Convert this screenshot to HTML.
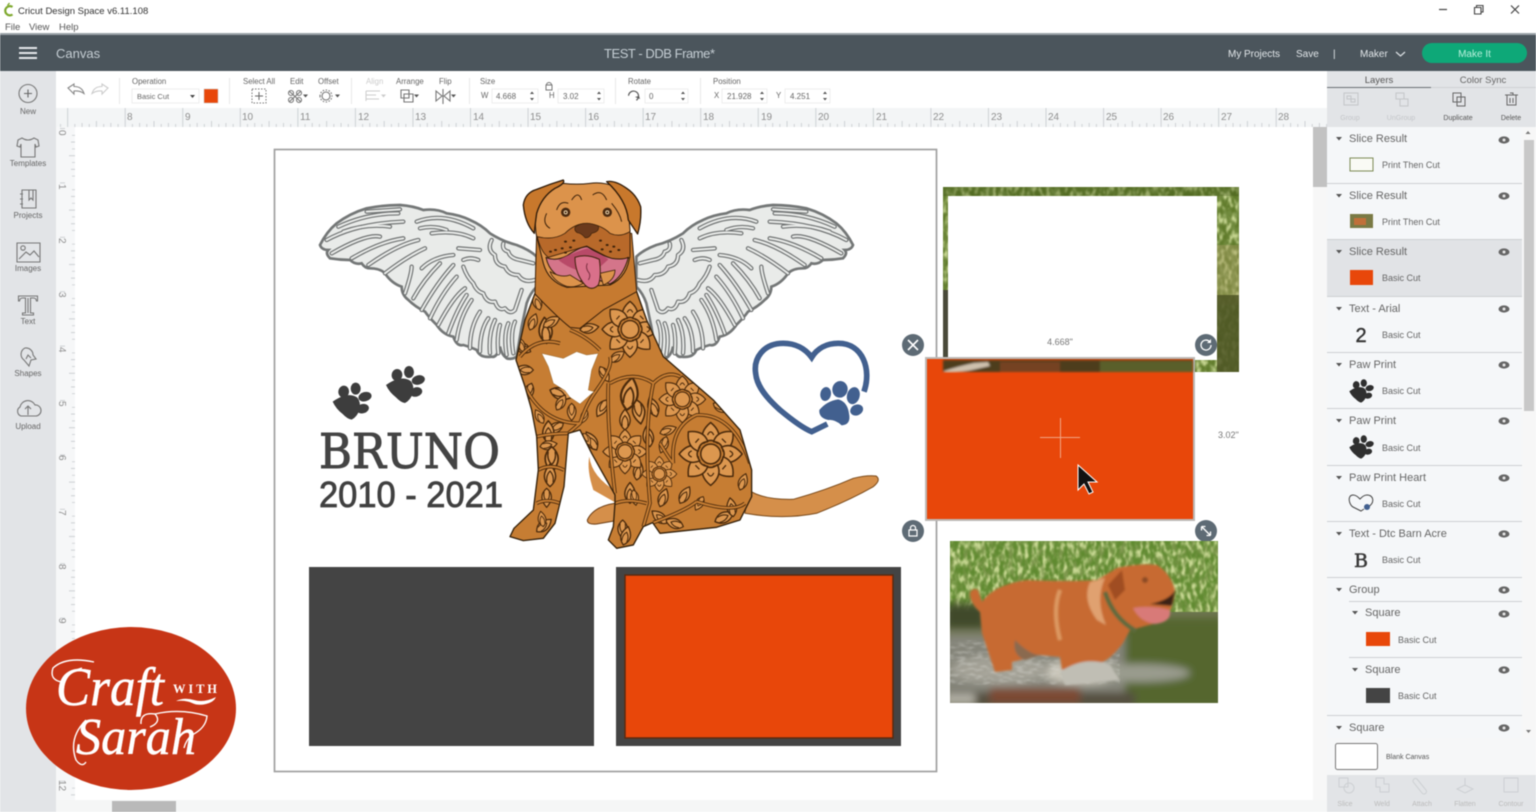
<!DOCTYPE html>
<html><head><meta charset="utf-8"><title>Cricut Design Space</title>
<style>
html,body{margin:0;padding:0;width:1536px;height:812px;overflow:hidden;background:#fff}
svg{display:block;position:absolute;left:0;top:0;filter:blur(.4px)}
text{font-family:"Liberation Sans",sans-serif}
.t{font-size:7.8px;fill:#666}
.l{font-size:8px;fill:#666;text-anchor:middle}
.v{font-size:8px;fill:#666}
.r{font-size:10px;fill:#8e8e8e}
.h{font-size:11px;fill:#666}
.c{font-size:9px;fill:#666}
.a{font-size:7px;fill:#555;text-anchor:middle}
.d{font-size:7px;fill:#bbb;text-anchor:middle}
.ic{fill:none;stroke:#777;stroke-width:1.1}
.ln{fill:none;stroke:#4a2a0c;stroke-width:2.8}
.pt{fill:#dc974f;stroke:#4a2a0c;stroke-width:3.4}
</style></head><body>
<svg width="1536" height="812" viewBox="0 0 1536 812" xmlns="http://www.w3.org/2000/svg">
<defs>
<pattern id="rt" patternUnits="userSpaceOnUse" x="124.7" y="108" width="57.55" height="19">
<path d="M.5 0V19M7.7 16V19M14.9 15V19M22.1 16V19M29.3 13V19M36.5 16V19M43.7 15V19M50.9 16V19" stroke="#bfc3c7" stroke-width=".7" fill="none"/></pattern>
<pattern id="rl" patternUnits="userSpaceOnUse" x="56" y="128" width="19" height="54.4">
<path d="M4 .5H9M16 7.3H19M15 14.1H19M16 20.9H19M13 27.7H19M16 34.5H19M15 41.3H19M16 48.1H19" stroke="#bfc3c7" stroke-width=".7" fill="none"/></pattern>
<g id="eye"><ellipse cx="0" cy="0" rx="5.5" ry="3.6" fill="#666"/><circle cx="0" cy="0" r="1.5" fill="#e8e8e8"/></g>
<path id="tri" d="M-3-2H3L0 1.5Z" fill="#555"/>
<g id="paw"><path d="M68,125 Q85,113 100,108 Q125,101 142,113 Q154,127 148,150 Q142,170 125,179 Q112,177 98,162 Q78,147 68,125Z"/><ellipse cx="101" cy="95" rx="16" ry="18" transform="rotate(10 101 95)"/><ellipse cx="137" cy="86" rx="15" ry="18"/><ellipse cx="165" cy="110" rx="20" ry="14" transform="rotate(-15 165 110)"/><ellipse cx="158" cy="146" rx="19" ry="14" transform="rotate(-15 158 146)"/></g>
<g id="fe" fill="none" stroke-linecap="round" stroke-linejoin="round">
<path d="M115,170 Q200,130 295,130M80,210 Q170,160 310,155M95,250 Q200,190 240,200M155,265 Q240,215 310,205M205,285 Q290,225 355,210M255,310 Q320,260 375,235M315,370 Q335,310 335,290M365,295 Q400,260 460,255M365,420 Q410,340 460,285M415,465 Q460,380 495,355M470,510 Q480,440 515,390M540,545 Q540,480 565,445M595,550 Q590,500 600,465M640,550 Q630,490 645,455M340,385 Q370,330 420,280M390,445 Q425,370 470,320M445,490 Q470,420 500,375M510,535 Q510,470 540,425M570,550 Q565,490 585,450M620,555 Q610,495 625,460"/>
<path d="M350,155 Q430,125 520,175M395,190 Q470,180 520,205M475,235 L540,240M490,270 Q510,260 535,270M360,175 Q400,165 440,180M200,125 L300,118M130,185 Q200,160 270,170"/>
<path d="M490,290 q10,30 30,50 q10,25 30,30 q10,30 35,25 q10,30 30,20 q15,20 30,5 l20,-60"/>
<path d="M575,210 q-15,30 10,45 q0,30 30,35 q10,25 40,25 q15,25 50,15M610,220 q-5,20 15,25 q5,20 35,25 l40,10"/>
</g>
<path id="wo" d="M60,225 Q80,185 110,160 Q150,130 200,115 Q250,105 300,105 Q340,108 370,120 Q410,115 440,130 Q480,135 510,150 Q545,165 570,190 Q610,215 650,225 Q690,240 710,260 L710,350 Q690,370 680,400 L665,470 L650,560 Q635,570 620,565 Q605,555 600,530 Q590,565 575,560 Q540,565 530,540 Q510,530 490,525 Q470,530 460,500 Q430,495 410,465 Q385,440 375,425 Q345,410 325,390 Q305,375 305,350 Q275,340 255,310 Q240,295 210,295 Q195,295 185,280 Q165,285 150,270 Q120,270 90,265 Q75,250 85,240 Q65,240 60,225Z"/>
<g id="wing"><use href="#wo" fill="#e9ebe9" stroke="#747777" stroke-width="8"/><use href="#fe" stroke="#6f7272" stroke-width="13"/><use href="#fe" stroke="#e9ebe9" stroke-width="6"/></g>
<path id="pet" d="M-15,-24 Q-27,-48 0,-70 Q27,-48 15,-24 Q0,-36 -15,-24Z"/>
<g id="fl"><g class="pt">
<use href="#pet"/><use href="#pet" transform="rotate(45)"/><use href="#pet" transform="rotate(90)"/><use href="#pet" transform="rotate(135)"/><use href="#pet" transform="rotate(180)"/><use href="#pet" transform="rotate(225)"/><use href="#pet" transform="rotate(270)"/><use href="#pet" transform="rotate(315)"/>
<circle r="22"/></g>
<path class="ln" d="M-7,-42 Q0,-56 7,-42M-7,42 Q0,56 7,42M-42,-7 Q-56,0 -42,7M42,-7 Q56,0 42,7M-34,-25 L-26,-34M34,25 L26,34M25,-34 L34,-25M-25,34 L-34,25"/></g>
<g id="lf"><path class="pt" d="M0,0 Q-26,-22 0,-52 Q26,-22 0,0Z"/><path class="ln" d="M-7,-10 Q-10,-26 0,-36 Q10,-26 7,-10"/></g>
<path id="bdy" d="M105,370 L75,450 L48,570 L75,650 L95,720 L110,800 L115,900 L100,1020 L42,1075 L30,1100 L70,1112 L130,1105 L165,1060 L192,950 L205,790 L240,780 L275,850 L345,975 L345,1000 L340,1070 L325,1110 L350,1135 L400,1125 L430,1070 L458,1058 L480,1090 L650,1072 L720,1050 L755,980 L755,900 L720,780 L640,690 L490,560 L440,450 L410,365Z"/>
<clipPath id="bc"><use href="#bdy"/></clipPath>
<path id="band" d="M75,650 Q130,760 240,760 Q260,700 290,660M325,640 Q320,760 345,970M460,640 Q430,780 450,1000L430,1070M460,1058 Q560,1020 590,995M520,880 Q510,770 590,735 Q700,730 750,880M590,995 Q700,1030 735,1000M205,790 L240,760M110,800 Q155,790 205,790M290,660 Q340,590 330,560M330,640 Q400,600 460,640M60,560 Q110,500 180,520M115,900 Q150,880 192,900M110,1000 Q140,985 180,1000M345,1000 Q385,985 440,1000M460,640 Q500,600 540,620M480,820 Q510,870 520,880M210,480 Q260,500 300,540" fill="none" stroke-linejoin="round"/>
<filter id="b1" x="-5%" y="-5%" width="110%" height="110%"><feGaussianBlur stdDeviation="1.1"/></filter>
<filter id="b2" x="-10%" y="-10%" width="120%" height="120%"><feGaussianBlur stdDeviation="4"/></filter>
<filter id="dk" x="0" y="0" width="100%" height="100%"><feTurbulence type="fractalNoise" baseFrequency=".22 .09" numOctaves="3" seed="4"/><feColorMatrix values="0 0 0 0 .2  0 0 0 0 .3  0 0 0 0 .07  3.5 0 0 0 -1.5"/><feGaussianBlur stdDeviation=".7"/><feComposite in2="SourceAlpha" operator="in"/></filter>
<filter id="lt" x="0" y="0" width="100%" height="100%"><feTurbulence type="fractalNoise" baseFrequency=".28 .12" numOctaves="3" seed="11"/><feColorMatrix values="0 0 0 0 .62  0 0 0 0 .72  0 0 0 0 .32  3.5 0 0 0 -1.6"/><feGaussianBlur stdDeviation=".7"/><feComposite in2="SourceAlpha" operator="in"/></filter>
<filter id="wn" x="0" y="0" width="100%" height="100%"><feTurbulence type="fractalNoise" baseFrequency=".12 .35" numOctaves="2" seed="7"/><feColorMatrix values="0 0 0 0 .8  0 0 0 0 .8  0 0 0 0 .76  3.5 0 0 0 -1.6"/><feGaussianBlur stdDeviation=".8"/><feComposite in2="SourceAlpha" operator="in"/></filter>
<clipPath id="pc"><rect x="950" y="541" width="268" height="162"/></clipPath>
</defs>

<!-- app chrome -->
<rect width="1536" height="33" fill="#fff"/>
<rect y="33" width="1536" height="2" fill="#9aa2a8"/>
<rect y="35" width="1536" height="36" fill="#4b555c"/>
<rect y="71" width="56" height="741" fill="#e2e4e7"/>
<rect x="56" y="71" width="1271" height="37" fill="#fff"/>
<rect x="56" y="108" width="1271" height="19" fill="#f3f5f6"/>
<rect x="56" y="108" width="1271" height="19" fill="url(#rt)"/>
<rect x="56" y="127" width="19" height="673" fill="#f6f7f8"/>
<rect x="56" y="127" width="19" height="673" fill="url(#rl)"/>
<rect x="75" y="127" width="1238" height="673" fill="#fff"/>
<rect x="56" y="800" width="1271" height="12" fill="#f5f6f6"/>
<rect x="112" y="801" width="64" height="11" fill="#b9b9b9"/>
<rect x="1313" y="127" width="14" height="673" fill="#f7f7f7"/>
<rect x="1313" y="127" width="14" height="60" fill="#c2c2c2"/>

<!-- title bar -->
<path d="M12.500 7A4.600 4.600 0 1 0 12.500 14.500" fill="none" stroke="#7da82c" stroke-width="2.200"/>
<path d="M7.500 5.500L9.500 3" stroke="#7da82c" stroke-width="1.400"/>
<text x="18" y="14" font-size="9.500" fill="#333">Cricut Design Space  v6.11.108</text>
<text x="5" y="30" font-size="9.500" fill="#555">File</text>
<text x="29" y="30" font-size="9.500" fill="#555">View</text>
<text x="59" y="30" font-size="9.500" fill="#555">Help</text>
<path d="M1439 9.500H1447" stroke="#444" stroke-width="1.200"/>
<path d="M1474.500 7.500h6.500v6.500h-6.500zM1476.500 7.500v-2h6.500v6.500h-2" fill="none" stroke="#444" stroke-width="1.100"/>
<path d="M1511 5.500l8 8M1519 5.500l-8 8" stroke="#444" stroke-width="1.200"/>

<!-- header -->
<path d="M19 48H37M19 53H37M19 58H37" stroke="#e4e7ea" stroke-width="2"/>
<text x="56" y="58" font-size="13" fill="#c5ced4">Canvas</text>
<text x="604" y="58" font-size="13" fill="#c5ced4" textLength="111">TEST - DDB Frame*</text>
<text x="1228" y="57" font-size="10" fill="#e2e7ea" textLength="52">My Projects</text>
<text x="1296" y="57" font-size="10" fill="#e2e7ea">Save</text>
<text x="1333" y="57" font-size="10" fill="#e2e7ea">|</text>
<text x="1360" y="57" font-size="10" fill="#e2e7ea">Maker</text>
<path d="M1396 52l4.500 4 4.500-4" fill="none" stroke="#dde2e5" stroke-width="1.200"/>
<rect x="1422" y="43" width="105" height="20" rx="10" fill="#0ea878"/>
<text x="1474.500" y="57" font-size="10" fill="#b8f0dc" text-anchor="middle">Make It</text>

<!-- sidebar -->
<circle cx="28" cy="93.500" r="9" fill="none" stroke="#777" stroke-width="1.100"/><path d="M24 93.500h8M28 89.500v8" stroke="#666" stroke-width="1.100"/>
<text class="l" x="28" y="114">New</text>
<path class="ic" d="M22 138l-4 2-1 6 3 1 1-3v13h14v-13l1 3 3-1-1-6-4-2q-6 4-12 0Z"/>
<text class="l" x="28" y="166">Templates</text>
<path class="ic" d="M22 190h14v18H22zM29 190v10l2-2 2 2v-10M20 194h3M20 199h3M20 204h3"/>
<text class="l" x="28" y="218">Projects</text>
<path class="ic" d="M17 243h23v19H17zM19 259l7-7 4 3 4-4 5 6"/><circle class="ic" cx="23" cy="248" r="2.200"/>
<text class="l" x="28" y="271">Images</text>
<path class="ic" d="M18.500 296h19v5h-1q-.5-3-3-3h-3v15h3v2h-11v-2h3V298h-3q-2.500 0-3 3h-1ZM28 298v15"/>
<text class="l" x="28" y="324">Text</text>
<path class="ic" d="M25 348a7 7 0 0 1 8 7l3 4-5 1-2 6-5-6a7 7 0 0 1 1-12ZM26 359l2-4 3 3"/>
<text class="l" x="28" y="376">Shapes</text>
<path class="ic" d="M21 416a5 5 0 0 1-1-9 8 8 0 0 1 15-2 5.500 5.500 0 0 1 1 11ZM28 415v-8M25 409l3-3 3 3"/>
<text class="l" x="28" y="429">Upload</text>

<!-- toolbar -->
<path d="M68 88l6-4v2.500q8 0 10 7-4-3-10-2.500V94Z" fill="none" stroke="#888" stroke-width="1.100"/>
<path d="M108 88l-6-4v2.500q-8 0-10 7 4-3 10-2.500V94Z" fill="none" stroke="#ccc" stroke-width="1.100"/>
<path d="M119.500 78V104M229.500 78V104M351.500 78V104M469.500 78V104M615.500 78V104M700.500 78V104" stroke="#e8e8e8"/>
<text class="t" x="132" y="84">Operation</text>
<rect x="132" y="89" width="67" height="14" fill="#fff" stroke="#eee"/>
<text class="v" x="137" y="99" style="font-size:7.500px">Basic Cut</text><path d="M190 95h5l-2.500 3Z" fill="#444"/>
<rect x="204" y="89" width="14" height="14" fill="#e8470a" stroke="#ccc" stroke-width=".5"/>
<text class="t" x="243" y="84">Select All</text>
<rect x="252" y="89" width="14" height="14" fill="none" stroke="#777" stroke-dasharray="1.500 1.500"/><path d="M259 92v8M255 96h8" stroke="#666"/>
<text class="t" x="290" y="84">Edit</text>
<path class="ic" d="M289 91l12 11M301 91l-12 11"/><circle class="ic" cx="291" cy="93" r="2.500"/><circle class="ic" cx="299" cy="93" r="2.500"/><circle class="ic" cx="291" cy="100" r="2.500"/><circle class="ic" cx="299" cy="100" r="2.500"/><path d="M303 94.500h5l-2.500 3Z" fill="#555"/>
<text class="t" x="318" y="84">Offset</text>
<circle class="ic" cx="326" cy="96" r="4"/><path class="ic" stroke-dasharray="1.500 1.500" d="M320 96a6 6 0 1 0 12 0a6 6 0 1 0-12 0"/><path d="M335 94.500h5l-2.500 3Z" fill="#555"/>
<text class="t" x="366" y="84" style="fill:#ccc">Align</text>
<path d="M366 91h14M366 95h10M366 99h13M366 91v10" stroke="#ccc" fill="none"/><path d="M381 94.500h5l-2.500 3Z" fill="#ccc"/>
<text class="t" x="396" y="84">Arrange</text>
<path class="ic" d="M401 90h8v8h-8zM404 94h9v8h-9z"/><path d="M414 94.500h5l-2.500 3Z" fill="#555"/>
<text class="t" x="439" y="84">Flip</text>
<path class="ic" d="M436 91l6 5-6 5zM450 91l-6 5 6 5zM443 89v15"/><path d="M451 94.500h5l-2.500 3Z" fill="#555"/>
<text class="t" x="480" y="84">Size</text>
<text class="t" x="481" y="98">W</text>
<rect x="492" y="89" width="46" height="14" fill="#fff" stroke="#eee"/><text class="v" x="496" y="99">4.668</text>
<path d="M530 94l2-2.500 2 2.500ZM530 98l2 2.500 2-2.500Z" fill="#555"/>
<circle class="ic" cx="549" cy="85" r="2.500"/><path d="M546 85h6v5h-6z" fill="#fff" stroke="#777"/>
<text class="t" x="549" y="98">H</text>
<rect x="558" y="89" width="46" height="14" fill="#fff" stroke="#eee"/><text class="v" x="563" y="99">3.02</text>
<path d="M597 94l2-2.500 2 2.500ZM597 98l2 2.500 2-2.500Z" fill="#555"/>
<text class="t" x="628" y="84">Rotate</text>
<path d="M638 98a5 5 0 1 0-9 0" fill="none" stroke="#555" stroke-width="1.200" transform="rotate(30 633 96)"/><path d="M635 97l4-1 1 3Z" fill="#555"/>
<rect x="645" y="89" width="43" height="14" fill="#fff" stroke="#eee"/><text class="v" x="649" y="99">0</text>
<path d="M681 94l2-2.500 2 2.500ZM681 98l2 2.500 2-2.500Z" fill="#555"/>
<text class="t" x="713" y="84">Position</text>
<text class="t" x="714" y="98">X</text>
<rect x="722" y="89" width="45" height="14" fill="#fff" stroke="#eee"/><text class="v" x="727" y="99">21.928</text>
<path d="M760 94l2-2.500 2 2.500ZM760 98l2 2.500 2-2.500Z" fill="#555"/>
<text class="t" x="776" y="98">Y</text>
<rect x="785" y="89" width="45" height="14" fill="#fff" stroke="#eee"/><text class="v" x="790" y="99">4.251</text>
<path d="M823 94l2-2.500 2 2.500ZM823 98l2 2.500 2-2.500Z" fill="#555"/>

<!-- rulers text -->
<text class="r" x="127" y="120">8</text><text class="r" x="185" y="120">9</text><text class="r" x="242" y="120">10</text><text class="r" x="300" y="120">11</text><text class="r" x="358" y="120">12</text><text class="r" x="415" y="120">13</text><text class="r" x="473" y="120">14</text><text class="r" x="530" y="120">15</text><text class="r" x="588" y="120">16</text><text class="r" x="645" y="120">17</text><text class="r" x="703" y="120">18</text><text class="r" x="761" y="120">19</text><text class="r" x="818" y="120">20</text><text class="r" x="876" y="120">21</text><text class="r" x="933" y="120">22</text><text class="r" x="991" y="120">23</text><text class="r" x="1048" y="120">24</text><text class="r" x="1106" y="120">25</text><text class="r" x="1163" y="120">26</text><text class="r" x="1221" y="120">27</text><text class="r" x="1278" y="120">28</text>
<text class="r" transform="translate(59,130) rotate(90)">0</text><text class="r" transform="translate(59,184) rotate(90)">1</text><text class="r" transform="translate(59,238) rotate(90)">2</text><text class="r" transform="translate(59,292) rotate(90)">3</text><text class="r" transform="translate(59,347) rotate(90)">4</text><text class="r" transform="translate(59,401) rotate(90)">5</text><text class="r" transform="translate(59,455) rotate(90)">6</text><text class="r" transform="translate(59,510) rotate(90)">7</text><text class="r" transform="translate(59,564) rotate(90)">8</text><text class="r" transform="translate(59,618) rotate(90)">9</text><text class="r" transform="translate(59,780) rotate(90)">12</text>

<!-- mat -->
<rect x="274.500" y="149.500" width="662" height="622" fill="#fff" stroke="#a0a0a0" stroke-width="1.700"/>

<!-- wings -->
<g transform="translate(300,170) scale(.3333)"><use href="#wing"/></g>
<g transform="translate(873,170) scale(-.3333,.3333)"><use href="#wing"/></g>

<!-- dog -->
<g transform="translate(500,170) scale(.3333)" stroke-linejoin="round">
<path d="M745,960 Q790,990 880,988 Q980,960 1060,925 Q1100,915 1128,918 Q1145,930 1120,950 Q1050,990 950,1030 Q850,1050 735,1030Z" fill="#d58f4a" stroke="#7a4a1a" stroke-width="3"/>
<path d="M262,1050 Q280,1010 345,1000 L360,1050 L290,1062 Q262,1065 262,1050Z" fill="#d58f4a" stroke="#6a3c14" stroke-width="3"/>
<path d="M268,860 Q275,920 350,965 L350,1000 L280,960 Q260,900 268,860Z" fill="#d58f4a"/>
<use href="#bdy" fill="#c67d33"/>
<g clip-path="url(#bc)">
<use href="#lf" transform="translate(140,520) rotate(-5) scale(1.500)"/>
<use href="#lf" transform="translate(92,545) rotate(-65) scale(1.100)"/>
<use href="#lf" transform="translate(100,600) rotate(-90) scale(1.100)"/>
<use href="#lf" transform="translate(95,640) rotate(200) scale(1.100)"/>
<use href="#lf" transform="translate(150,660) rotate(110) scale(1.300)"/>
<use href="#lf" transform="translate(215,700) rotate(180) scale(1)"/>
<use href="#lf" transform="translate(190,760) rotate(-120) scale(1.100)"/>
<use href="#lf" transform="translate(145,820) rotate(0) scale(1.300)"/>
<use href="#lf" transform="translate(120,830) rotate(80) scale(1)"/>
<use href="#lf" transform="translate(155,830) rotate(180) scale(1.500)"/>
<use href="#lf" transform="translate(150,950) rotate(0) scale(1.300)"/>
<use href="#lf" transform="translate(140,955) rotate(180) scale(1.100)"/>
<use href="#lf" transform="translate(110,1085) rotate(50) scale(1.100)"/>
<use href="#lf" transform="translate(130,1070) rotate(-10) scale(.9)"/>
<use href="#lf" transform="translate(290,840) rotate(-30) scale(1.200)"/>
<use href="#lf" transform="translate(250,790) rotate(150) scale(.8)"/>
<use href="#lf" transform="translate(380,720) rotate(10) scale(1.900)"/>
<use href="#lf" transform="translate(410,690) rotate(170) scale(1.400)"/>
<use href="#lf" transform="translate(375,780) rotate(0) scale(1.200)"/>
<use href="#lf" transform="translate(368,1050) rotate(180) scale(1.100)"/>
<use href="#lf" transform="translate(390,1000) rotate(0) scale(1.200)"/>
<use href="#lf" transform="translate(370,1125) rotate(15) scale(1.100)"/>
<use href="#lf" transform="translate(645,1055) rotate(65) scale(1.200)"/>
<use href="#lf" transform="translate(550,1070) rotate(-70) scale(1.100)"/>
<use href="#lf" transform="translate(700,1040) rotate(-10) scale(1.100)"/>
<use href="#lf" transform="translate(500,1060) rotate(-50) scale(1.100)"/>
<use href="#lf" transform="translate(330,575) rotate(55) scale(1)"/>
<use href="#lf" transform="translate(450,830) rotate(-10) scale(1.200)"/>
<use href="#lf" transform="translate(480,790) rotate(70) scale(1)"/>
<use href="#lf" transform="translate(480,1010) rotate(20) scale(1.100)"/>
<use href="#lf" transform="translate(640,700) rotate(120) scale(1)"/>
<use href="#lf" transform="translate(120,420) rotate(-20) scale(1)"/>
<use href="#lf" transform="translate(130,470) rotate(60) scale(1.100)"/>
<use href="#lf" transform="translate(90,480) rotate(20) scale(1)"/>
<use href="#lf" transform="translate(70,545) rotate(-20) scale(.9)"/>
<use href="#lf" transform="translate(240,480) rotate(80) scale(1.100)"/>
<use href="#lf" transform="translate(300,590) rotate(150) scale(1)"/>
<use href="#lf" transform="translate(320,690) rotate(-150) scale(1.100)"/>
<use href="#lf" transform="translate(170,720) rotate(30) scale(1)"/>
<use href="#lf" transform="translate(260,720) rotate(200) scale(.8)"/>
<use href="#lf" transform="translate(130,760) rotate(-30) scale(.9)"/>
<use href="#lf" transform="translate(410,930) rotate(10) scale(1.100)"/>
<use href="#lf" transform="translate(400,960) rotate(170) scale(.9)"/>
<use href="#lf" transform="translate(540,1000) rotate(30) scale(1.100)"/>
<use href="#lf" transform="translate(610,980) rotate(-150) scale(.9)"/>
<use href="#lf" transform="translate(470,740) rotate(-20) scale(1.200)"/>
<use href="#lf" transform="translate(500,800) rotate(200) scale(1)"/>
<use href="#lf" transform="translate(720,960) rotate(20) scale(1)"/>
<use href="#fl" transform="translate(390,478) scale(1.200)"/>
<use href="#fl" transform="translate(547,688) scale(1)"/>
<use href="#fl" transform="translate(632,852) scale(1.350)"/>
<use href="#fl" transform="translate(375,845) scale(.95)"/>
<use href="#fl" transform="translate(478,912) scale(.75)"/>
<use href="#band" stroke="#4a2a0c" stroke-width="11"/>
<use href="#band" stroke="#c67d33" stroke-width="6"/>
</g>
<use href="#bdy" fill="none" stroke="#33200a" stroke-width="4"/>
<path d="M125,550 L190,565 L230,545 L260,555 L295,550 L275,600 L265,660 L282,665 L240,702 L210,682 L195,662 L160,640 L145,590Z" fill="#fff" stroke="#9a6a30" stroke-width="1.500"/>
<path d="M110,190 L105,372 Q170,440 210,472 L240,475 L310,420 L410,365 L395,190Z" fill="#c67a30" stroke="#3d220a" stroke-width="3"/>
<path d="M110,72 Q150,42 190,40 Q230,45 270,40 Q310,35 345,50 Q385,85 390,180 L390,250 Q385,320 330,345 L200,352 Q145,335 130,280 L108,190 Q102,130 110,72Z" fill="#dc934b" stroke="#2e1a08" stroke-width="3"/>
<path d="M70,105 Q75,68 110,58 Q150,42 190,30 Q197,40 165,55 Q125,80 110,130 Q105,165 103,190 Q75,160 70,105Z" fill="#c8782c" stroke="#2e1a08" stroke-width="4"/>
<path d="M320,35 Q345,30 380,55 Q410,75 422,110 Q425,150 413,192 Q395,165 385,150 Q380,90 320,35Z" fill="#c8782c" stroke="#2e1a08" stroke-width="4"/>
<path d="M112,200 Q160,212 195,190 Q225,160 262,160 Q305,165 330,190 Q360,203 390,185 L390,262 Q370,272 330,265 L260,228 L145,262 Q122,245 112,200Z" fill="#b8692a" stroke="#3d220a" stroke-width="2.500"/>
<path d="M138,262 Q165,275 200,258 Q240,230 262,230 Q300,255 335,265 Q370,270 385,262 Q370,320 330,342 L295,330 L215,335 Q150,320 138,262Z" fill="#d4758a" stroke="#2e1a08" stroke-width="3"/>
<path d="M175,270 Q225,245 262,235 Q310,255 325,268 L290,300 L230,300 Q200,290 175,270Z" fill="#b84a68"/>
<path d="M150,305 Q185,325 210,315 L250,340 Q215,358 190,345Q160,330 150,305Z" fill="#dc934b" stroke="#3d220a" stroke-width="2.500"/>
<path d="M300,310 L345,300 Q345,330 310,345Z" fill="#dc934b" stroke="#3d220a" stroke-width="2.500"/>
<path d="M225,262 Q260,250 298,268 Q305,320 295,345 Q275,365 255,345 Q225,310 225,262Z" fill="#d9708a" stroke="#3d220a" stroke-width="3"/>
<path d="M262,280 Q255,295 268,310 Q272,320 265,330" fill="none" stroke="#7a2f40" stroke-width="3"/>
<path d="M225,172 Q250,150 295,168 Q300,185 275,190 Q268,205 255,203 Q245,190 232,188 Q222,182 225,172Z" fill="#6b3a1c" stroke="#3d220a" stroke-width="2"/>
<circle cx="197" cy="127" r="14" fill="#4a2a10"/><circle cx="197" cy="127" r="6" fill="#f0d8b0"/><circle cx="197" cy="127" r="3" fill="#331a08"/>
<circle cx="322" cy="127" r="14" fill="#4a2a10"/><circle cx="322" cy="127" r="6" fill="#f0d8b0"/><circle cx="322" cy="127" r="3" fill="#331a08"/>
<path d="M215,90 Q235,60 245,90M205,100 Q180,90 170,120M278,75 Q305,55 320,90M335,100 Q360,130 365,155M140,130 Q125,160 150,175" fill="none" stroke="#3d220a" stroke-width="3"/>
<path d="M195,215 h3M220,212 h3M185,235 h3M210,232 h3M165,240 h3M150,245 h3M195,248 h3M300,212 h3M320,225 h3M340,230 h3M305,238 h3M330,245 h3M355,240 h3" stroke="#3d220a" stroke-width="6" stroke-linecap="round"/>
</g>

<!-- heart -->
<g transform="translate(740,330) scale(.3333)">
<path d="M372,185 C395,120 370,40 295,40 C260,40 232,55 215,82 C195,55 165,40 130,40 C70,40 40,85 47,130 C50,165 75,200 120,240 C150,265 190,295 215,305 L262,282" fill="none" stroke="#42608f" stroke-width="17"/>
<g fill="#42608f"><ellipse cx="257" cy="192" rx="16" ry="21" transform="rotate(10 257 192)"/><ellipse cx="300" cy="178" rx="23" ry="25" transform="rotate(10 300 178)"/><ellipse cx="340" cy="197" rx="19" ry="26" transform="rotate(15 340 197)"/><ellipse cx="350" cy="240" rx="20" ry="16" transform="rotate(-25 350 240)"/><path d="M238,240 Q260,213 295,208 Q322,215 327,250 Q334,284 305,286 Q285,268 265,270 Q236,264 238,240Z"/></g>
</g>

<!-- paws, text -->
<g transform="translate(310,360) scale(.3333)" fill="#3d3d3d"><use href="#paw"/><use href="#paw" transform="translate(160,-50)"/></g>
<text x="319" y="468" font-size="48" textLength="181" lengthAdjust="spacingAndGlyphs" style="font-family:'DejaVu Serif',serif" fill="#444" stroke="#444" stroke-width="1">BRUNO</text>
<text x="319" y="507" font-size="36" textLength="184" lengthAdjust="spacingAndGlyphs" fill="#404040" stroke="#404040" stroke-width=".8">2010 - 2021</text>

<!-- squares -->
<rect x="309" y="567" width="285" height="179" fill="#444"/>
<rect x="616" y="567" width="285" height="179" fill="#444"/>
<rect x="625" y="575" width="268" height="163" fill="#e8470a" stroke="#5a2a10" stroke-width="1.500"/>

<!-- frame photo -->
<g>
<rect x="943" y="187" width="296" height="185" fill="#5f7a2a"/>
<rect x="943" y="187" width="296" height="185" fill="#000" filter="url(#dk)"/>
<rect x="943" y="187" width="296" height="185" fill="#000" filter="url(#lt)"/>
<rect x="943" y="187" width="296" height="9" fill="#3f5218" opacity=".35"/>
<rect x="1217" y="245" width="22" height="60" fill="#a59a60" opacity=".45"/>
<rect x="1217" y="295" width="22" height="77" fill="#4d5524" opacity=".85"/>
<rect x="943" y="290" width="5" height="70" fill="#4a4a3a"/>
<rect x="948" y="196" width="269" height="164" fill="#fff"/>
</g>

<!-- selected -->
<rect x="926" y="358" width="268" height="162" fill="#e8470a" stroke="#bdb8b4" stroke-width="2"/>
<g filter="url(#b1)">
<rect x="943" y="360" width="250" height="12" fill="#4d3c1e"/>
<path d="M944 371q15-5 30-8l14-1 2 4-18 4q-15 3-28 2Z" fill="#cfc1ae"/>
<rect x="1000" y="362" width="60" height="10" fill="#7e4525" opacity=".8"/>
<rect x="1100" y="361" width="93" height="11" fill="#5a5f2a"/>
</g>
<path d="M1040 437.500H1080M1060.500 418V458" stroke="#f0a584" stroke-width="1"/>
<path d="M1078 465V490L1084 484L1089 494L1093 492L1088 482L1097 482Z" fill="#111" stroke="#fff" stroke-width="1"/>
<text x="1060" y="345" font-size="9" fill="#777" text-anchor="middle">4.668"</text>
<text x="1218" y="438" font-size="9" fill="#777">3.02"</text>
<circle cx="913" cy="345" r="11" fill="#5e6b75"/><path d="M908 340l10 10M918 340l-10 10" stroke="#fff" stroke-width="1.600"/>
<circle cx="1206" cy="345" r="11" fill="#5e6b75"/><path d="M1211 345a5 5 0 1 1-1.500-3.500" fill="none" stroke="#fff" stroke-width="1.300"/><path d="M1211 339v4h-4Z" fill="#fff"/>
<circle cx="913" cy="531" r="11" fill="#5e6b75"/><rect x="909" y="530" width="8" height="6" fill="none" stroke="#fff" stroke-width="1.200"/><path d="M910.500 530v-2a2.500 2.500 0 0 1 5 0v2" fill="none" stroke="#fff" stroke-width="1.200"/>
<circle cx="1206" cy="531" r="11" fill="#5e6b75"/><path d="M1201.500 526.500l9 9M1201.500 526.500h4M1201.500 526.500v4M1210.500 535.500h-4M1210.500 535.500v-4" stroke="#fff" stroke-width="1.300" fill="none"/>

<!-- photo -->
<g clip-path="url(#pc)">
<rect x="950" y="541" width="268" height="85" fill="#5f8a30"/>
<rect x="950" y="541" width="268" height="85" fill="#000" filter="url(#dk)"/>
<rect x="950" y="541" width="268" height="85" fill="#000" filter="url(#lt)"/>
<rect x="950" y="612" width="268" height="91" fill="#6e7550"/>
<g filter="url(#b2)">
<rect x="945" y="604" width="40" height="24" fill="#3f4a2a"/>
<rect x="945" y="634" width="190" height="60" fill="#85857a"/>
<rect x="1125" y="618" width="100" height="90" fill="#55662e"/>
<ellipse cx="1083" cy="672" rx="42" ry="12" fill="#c8c4b8"/>
<ellipse cx="1140" cy="673" rx="50" ry="9" fill="#9a9b8e"/>
<ellipse cx="1000" cy="670" rx="50" ry="14" fill="#a3a196"/>
<rect x="945" y="692" width="190" height="15" fill="#555040"/>
<rect x="990" y="688" width="90" height="15" fill="#7d4a30"/>
<rect x="945" y="694" width="30" height="10" fill="#b5b3a8"/>
</g>
<rect x="950" y="640" width="170" height="45" fill="#000" filter="url(#wn)" opacity=".35"/>
<g filter="url(#b1)">
<path d="M970,593 Q973,587 978,590 L982,602 Q993,585 1027,580 Q1067,582 1097,580 L1117,568 Q1140,563 1157,565 Q1170,573 1175,590 Q1173,617 1157,623 L1130,630 L1123,643 Q1110,660 1100,663 L1070,667 L1062,670 L1060,657 L1040,655 L1012,662 L1012,670 L995,672 L982,633 L980,612 Q970,603 970,593Z" fill="#c76b32"/>
<path d="M1090 582Q1082 600 1097 620L1106 625Q1095 600 1105 578Z" fill="#e0a170"/>
<path d="M1060 590Q1052 610 1060 640" stroke="#dd9a62" stroke-width="4" fill="none"/>
<path d="M1105 592Q1113 618 1136 631" stroke="#5d6b3c" stroke-width="4.500" fill="none"/>
<path d="M1108 585L1122 570L1125 590L1115 600Z" fill="#a04d22"/>
<path d="M1133 608Q1150 605 1170 610Q1172 622 1155 624Q1140 622 1133 608Z" fill="#d87a78"/>
<path d="M1150 604Q1170 600 1175 590L1172 606Z" fill="#3a2216"/>
<path d="M1015 640Q1030 655 1040 655L1025 660Q1012 655 1015 640Z" fill="#8a6a50"/>
<path d="M1060 672Q1085 655 1110 665L1120 680L1065 685Z" fill="#c0beb4"/>
<circle cx="1145" cy="580" r="3" fill="#8a4a26"/>
</g></g>

<!-- panel -->
<rect x="1327" y="71" width="209" height="741" fill="#f5f7f9"/>
<rect x="1327" y="71" width="209" height="56" fill="#e2e4e7"/>
<rect x="1327" y="87" width="104" height="1" fill="#6a6f74"/>
<rect x="1431" y="87" width="105" height="1" fill="#cfd2d5"/>
<text x="1379" y="83" font-size="9.500" fill="#555" text-anchor="middle">Layers</text>
<text x="1483" y="83" font-size="9.500" fill="#666" text-anchor="middle">Color Sync</text>
<g fill="none" stroke="#c4c6c9"><path d="M1344 93h14v12h-14zM1347 96h4v3h-4zM1351 99h4v3h-4z"/><path d="M1396 93h8v6h-8zM1400 99h8v7h-8z"/></g>
<g fill="none" stroke="#666"><path d="M1453 93h8v9h-8zM1457 97h8v9h-8z"/><path d="M1507 95h9v10h-9zM1505 95h13M1510 93h3v2M1510 98v5M1513 98v5"/></g>
<text class="a" x="1350" y="120" style="fill:#c4c6c9">Group</text>
<text class="a" x="1401" y="120" style="fill:#c4c6c9">UnGroup</text>
<text class="a" x="1458" y="120">Duplicate</text>
<text class="a" x="1511" y="120">Delete</text>

<rect x="1327" y="240" width="195" height="56" fill="#e1e3e6"/>
<rect x="1522" y="127" width="14" height="611" fill="#f7f7f7"/>
<rect x="1524" y="140" width="10" height="271" fill="#c8c8c8"/>
<path d="M1528 131l-2.500 3h5ZM1526 730h5l-2.500 3Z" fill="#777"/>
<path d="M1327 183.500H1522M1327 239.500H1522M1327 296.500H1522M1327 352.500H1522M1327 408.500H1522M1327 465.500H1522M1327 521.500H1522M1327 577.500H1522M1349 601.500H1522M1349 657.500H1522M1327 715.500H1522" stroke="#cdd0d3"/>

<use href="#tri" x="1339" y="139"/><text class="h" x="1349" y="142">Slice Result</text><use href="#eye" x="1504" y="140"/>
<rect x="1350" y="158" width="23" height="13" fill="#fafaf5" stroke="#7c8a55"/><text class="c" x="1382" y="168">Print Then Cut</text>
<use href="#tri" x="1339" y="196"/><text class="h" x="1349" y="199">Slice Result</text><use href="#eye" x="1504" y="196"/>
<rect x="1350" y="214" width="23" height="14" fill="#7a7a45"/><rect x="1354" y="218" width="12" height="7" fill="#c0703a"/><text class="c" x="1382" y="225">Print Then Cut</text>
<use href="#tri" x="1339" y="252"/><text class="h" x="1349" y="255">Slice Result</text><use href="#eye" x="1504" y="252"/>
<rect x="1350" y="270" width="23" height="15" fill="#e8470a"/><text class="c" x="1382" y="281">Basic Cut</text>
<use href="#tri" x="1339" y="309"/><text class="h" x="1349" y="312">Text - Arial</text><use href="#eye" x="1504" y="309"/>
<text x="1361" y="342" font-size="20" fill="#333" stroke="#333" stroke-width=".4" text-anchor="middle">2</text><text class="c" x="1382" y="338">Basic Cut</text>
<use href="#tri" x="1339" y="365"/><text class="h" x="1349" y="368">Paw Print</text><use href="#eye" x="1504" y="365"/>
<g transform="translate(1335,365) scale(.21)" fill="#2f2f2f"><use href="#paw"/></g><text class="c" x="1382" y="394">Basic Cut</text>
<use href="#tri" x="1339" y="421"/><text class="h" x="1349" y="424">Paw Print</text><use href="#eye" x="1504" y="421"/>
<g transform="translate(1335,421) scale(.21)" fill="#2f2f2f"><use href="#paw"/></g><text class="c" x="1382" y="451">Basic Cut</text>
<use href="#tri" x="1339" y="478"/><text class="h" x="1349" y="481">Paw Print Heart</text><use href="#eye" x="1504" y="478"/>
<path d="M1368 507C1375 503 1374 495 1367 495 1364 495 1362 497 1360 499 1358 497 1356 495 1353 495 1347 495 1349 505 1353 507L1361 511L1364 509" fill="none" stroke="#444" stroke-width="1"/><circle cx="1367" cy="507" r="3" fill="#42608f"/><text class="c" x="1382" y="507">Basic Cut</text>
<use href="#tri" x="1339" y="534"/><text class="h" x="1349" y="537">Text - Dtc Barn Acre</text><use href="#eye" x="1504" y="534"/>
<text x="1361" y="567" font-size="19" style="font-family:'DejaVu Serif',serif" fill="#3a3a3a" stroke="#3a3a3a" stroke-width=".5" text-anchor="middle">B</text><text class="c" x="1382" y="563">Basic Cut</text>
<use href="#tri" x="1339" y="590"/><text class="h" x="1349" y="593">Group</text><use href="#eye" x="1504" y="590"/>
<use href="#tri" x="1355" y="613"/><text class="h" x="1365" y="616">Square</text><use href="#eye" x="1504" y="614"/>
<rect x="1366" y="632" width="24" height="14" fill="#e8470a"/><text class="c" x="1398" y="643">Basic Cut</text>
<use href="#tri" x="1355" y="670"/><text class="h" x="1365" y="673">Square</text><use href="#eye" x="1504" y="670"/>
<rect x="1366" y="688" width="24" height="15" fill="#444"/><text class="c" x="1398" y="699">Basic Cut</text>
<use href="#tri" x="1339" y="728"/><text class="h" x="1349" y="731">Square</text><use href="#eye" x="1504" y="728"/>

<rect x="1327" y="738" width="209" height="37" fill="#f6f7f8"/>
<rect x="1335.500" y="743.500" width="42" height="26" rx="2" fill="#fff" stroke="#777"/>
<text x="1386" y="759" font-size="7" fill="#555">Blank Canvas</text>
<rect x="1327" y="775" width="209" height="37" fill="#e2e4e7"/>
<g fill="none" stroke="#cdd0d3"><path d="M1339 778h9v9h-9z"/><circle cx="1349" cy="788" r="5"/><path d="M1376 778h8v6h5v8h-9v-5h-4z"/><path d="M1417 779l9 11a2.500 2.500 0 0 1-4 3l-8-10a2 2 0 0 1 3-4Z"/><path d="M1457 789l8-4 8 4-8 4zM1465 778v8"/><path d="M1504 778h14v14h-14z"/></g>
<text class="d" x="1345" y="806">Slice</text><text class="d" x="1382" y="806">Weld</text><text class="d" x="1422" y="806">Attach</text><text class="d" x="1465" y="806">Flatten</text><text class="d" x="1511" y="806">Contour</text>

<!-- watermark -->
<ellipse cx="131" cy="708.500" rx="105" ry="81.500" fill="#c73516"/>
<text x="56" y="705" font-size="54" font-style="italic" textLength="108" lengthAdjust="spacingAndGlyphs" style="font-family:'Liberation Serif',serif" fill="#fff" stroke="#fff" stroke-width=".5">Craft</text>
<text x="76" y="754" font-size="52" font-style="italic" textLength="120" lengthAdjust="spacingAndGlyphs" style="font-family:'Liberation Serif',serif" fill="#fff" stroke="#fff" stroke-width=".5">Sarah</text>
<text x="173" y="693" font-size="12.500" font-weight="bold" fill="#fff" style="font-family:'Liberation Serif',serif" textLength="44">WITH</text>
<path d="M176 701q8-4 18-1t22-3q-2 5-10 7t-14-1-16-2Z" fill="#fff"/>
<path d="M94 662Q66 656 53 668Q49 680 62 682Q68 672 82 668M141 724Q140 712 155 714Q162 722 150 727M155 714Q180 708 207 716Q206 728 192 735Q186 740 184 748M86 720Q68 738 76 760Q82 768 86 762" fill="none" stroke="#fff" stroke-width="1.400"/>
</svg>
</body></html>
